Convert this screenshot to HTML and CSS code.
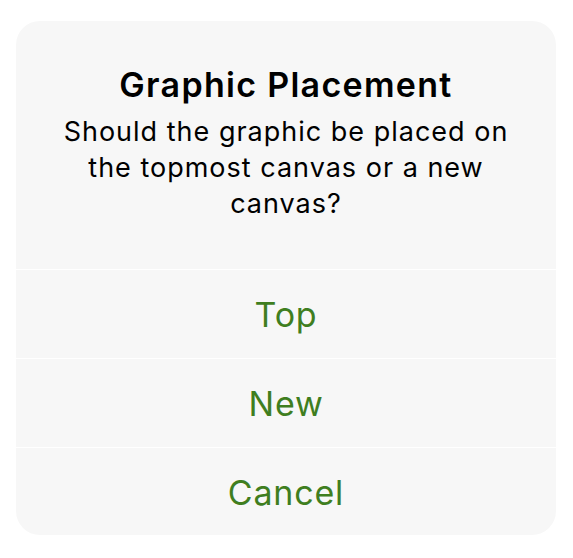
FILE: index.html
```html
<!DOCTYPE html>
<html lang="en">

<head>
  <title>Graphic Placement</title>
  <meta charset="UTF-8">
  <meta name="viewport" content="width=device-width, initial-scale=1">
  <link rel="stylesheet" href="styles.css">
</head>

<body>

  <div class="alert">
    <div class="alert-header">
      <h2>Graphic Placement</h2>
      <p>Should the graphic be placed on the topmost canvas or a new canvas?</p>
    </div>

    <div class="alert-actions">
      <button>Top</button>
      <button>New</button>
      <button>Cancel</button>
    </div>
  </div>

</body>

</html>
```

FILE: styles.css
```css
body {
  font-family: Inter, "Noto Sans", sans-serif;
  background: #FFFFFF;
  margin: 0;
}

.alert {
  width: 540px;
  height: 514px;
  margin: 21px 0 0 16px;
  background: #F7F7F7;
  border-radius: 24px;
  overflow: hidden;
  display: flex;
  flex-direction: column;
}

.alert-header {
  padding: 43px 40px 47px;
  text-align: center;
}

.alert-header h2 {
  margin: 0;
  font-size: 34px;
  line-height: 41px;
  font-weight: 600;
  letter-spacing: 1.3px;
  color: #000000;
}

.alert-header p {
  margin: 9px 0 0;
  font-size: 27px;
  line-height: 36px;
  letter-spacing: 1px;
  color: #000000;
}

.alert-actions {
  display: flex;
  flex-direction: column;
}

.alert-actions button {
  height: 89px;
  border: none;
  border-top: 1px solid #FFFFFF;
  background: transparent;
  font-family: inherit;
  font-size: 34px;
  letter-spacing: 0.8px;
  color: #3F7E1F;
  padding: 0;
  cursor: pointer;
}
```
